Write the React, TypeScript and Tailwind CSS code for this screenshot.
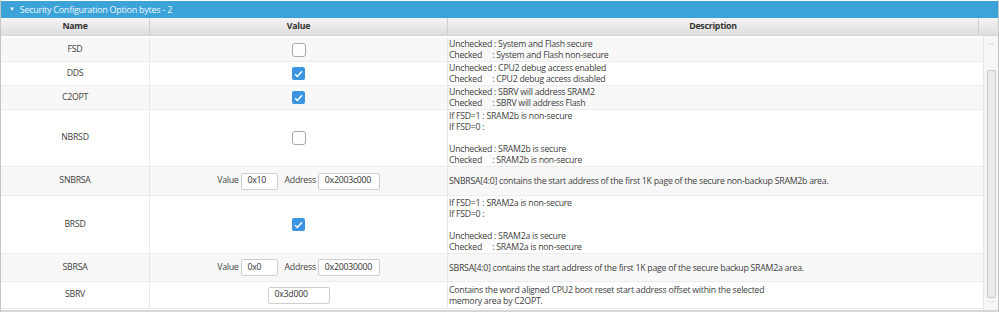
import React from "react";

type Row = {
  name: string;
  h: number;
  shade: boolean;
  value: React.ReactNode;
  desc: string[];
};

function CheckBox({ checked }: { checked: boolean }) {
  if (checked) {
    return (
      <span className="flex h-[13px] w-[13px] items-center justify-center rounded-[2px] bg-[#3c95e2]">
        <svg width="9" height="8" viewBox="0 0 9 8">
          <path d="M1 4.2 L3.4 6.5 L8 1.2" fill="none" stroke="white" strokeWidth="1.5" />
        </svg>
      </span>
    );
  }
  return <span className="block h-[14px] w-[14px] rounded-[3px] border border-[#a9a9a9] bg-white" />;
}

function Field({ text, w }: { text: string; w: string }) {
  return (
    <span className={`flex h-[17px] items-center rounded-[2px] border border-[#cfcfcf] bg-white pl-[6px] text-[#333] ${w}`}>
      {text}
    </span>
  );
}

function AddrPair({ value, address }: { value: string; address: string }) {
  return (
    <div className="flex items-center text-[#444]">
      <span className="mr-[2px]">Value</span>
      <Field text={value} w="w-[37px]" />
      <span className="ml-[7px] mr-[2px]">Address</span>
      <Field text={address} w="w-[62px]" />
    </div>
  );
}

const rows: Row[] = [
  {
    name: "FSD",
    h: 24,
    shade: true,
    value: <CheckBox checked={false} />,
    desc: ["Unchecked : System and Flash secure", "Checked\u00a0\u00a0\u00a0\u00a0 : System and Flash non-secure"],
  },
  {
    name: "DDS",
    h: 24,
    shade: false,
    value: <CheckBox checked />,
    desc: ["Unchecked : CPU2 debug access enabled", "Checked\u00a0\u00a0\u00a0\u00a0 : CPU2 debug access disabled"],
  },
  {
    name: "C2OPT",
    h: 24,
    shade: true,
    value: <CheckBox checked />,
    desc: ["Unchecked : SBRV will address SRAM2", "Checked\u00a0\u00a0\u00a0\u00a0 : SBRV will address Flash"],
  },
  {
    name: "NBRSD",
    h: 57,
    shade: false,
    value: <CheckBox checked={false} />,
    desc: [
      "If FSD=1 : SRAM2b is non-secure",
      "If FSD=0 :",
      "",
      "Unchecked : SRAM2b is secure",
      "Checked\u00a0\u00a0\u00a0\u00a0 : SRAM2b is non-secure",
    ],
  },
  {
    name: "SNBRSA",
    h: 29,
    shade: true,
    value: <AddrPair value="0x10" address="0x2003c000" />,
    desc: ["SNBRSA[4:0] contains the start address of the first 1K page of the secure non-backup SRAM2b area."],
  },
  {
    name: "BRSD",
    h: 58,
    shade: false,
    value: <CheckBox checked />,
    desc: [
      "If FSD=1 : SRAM2a is non-secure",
      "If FSD=0 :",
      "",
      "Unchecked : SRAM2a is secure",
      "Checked\u00a0\u00a0\u00a0\u00a0 : SRAM2a is non-secure",
    ],
  },
  {
    name: "SBRSA",
    h: 28,
    shade: true,
    value: <AddrPair value="0x0" address="0x20030000" />,
    desc: ["SBRSA[4:0] contains the start address of the first 1K page of the secure backup SRAM2a area."],
  },
  {
    name: "SBRV",
    h: 27,
    shade: false,
    value: <Field text="0x3d000" w="w-[62px]" />,
    desc: [
      "Contains the word aligned CPU2 boot reset start address offset within the selected",
      "memory area by C2OPT.",
    ],
  },
];

export default function App() {
  return (
    <div className="h-[312px] w-[999px] overflow-hidden bg-white font-['Open_Sans',sans-serif] text-[8.75px] tracking-[-0.25px]">
      <div className="flex h-[312px] flex-col border-x border-[#c4c4c4]">
        <div className="mt-[1px] flex h-[17px] items-center bg-[#3ba3d8] pl-[8px] text-[9px] text-[#eef7fc]">
          <span className="mr-[5px] text-[6px]">▼</span>
          <span>Security Configuration Option bytes - 2</span>
        </div>
        <div className="grid h-[18px] grid-cols-[149px_298px_531px_1fr] border-b border-[#d4d4d4] bg-gradient-to-b from-[#f4f4f4] to-[#dedede] font-bold text-[#333]">
          <div className="flex items-center justify-center border-r border-[#d0d0d0]">Name</div>
          <div className="flex items-center justify-center border-r border-[#d0d0d0]">Value</div>
          <div className="flex items-center justify-center border-r border-[#d0d0d0]">Description</div>
          <div />
        </div>
        <div className="flex flex-1">
          <div className="flex flex-1 flex-col pt-[2px]">
            {rows.map((r) => (
              <div
                key={r.name}
                style={{ height: r.h }}
                className={`grid grid-cols-[149px_298px_1fr] border-b border-[#ececec] text-[#404040] ${r.shade ? "bg-[#f8f8f8]" : "bg-white"}`}
              >
                <div className="flex items-center justify-center border-r border-[#e8e8e8]">{r.name}</div>
                <div className="flex items-center justify-center border-r border-[#e8e8e8]">{r.value}</div>
                <div className="flex flex-col justify-center pl-[1px] pt-[1px] leading-[11px]">
                  {r.desc.map((d, i) => (
                    <span key={i} className="h-[11px] whitespace-pre">
                      {d}
                    </span>
                  ))}
                </div>
              </div>
            ))}
          </div>
          <div className="flex w-[15px] flex-col items-center border-l border-[#e6e6e6] bg-[#f6f6f6] pt-[2px] pb-[2px]">
            <span className="text-[7px] leading-[10px] text-[#b0b0b0]">︿</span>
            <div className="mt-[22px] w-[9px] flex-1 rounded-[2px] border border-[#c8c8c8] bg-[#ebebeb]" />
            <span className="text-[7px] leading-[10px] text-[#b0b0b0]">﹀</span>
          </div>
        </div>
        <div className="h-[2px] bg-[#d6d6d6]" />
      </div>
    </div>
  );
}
